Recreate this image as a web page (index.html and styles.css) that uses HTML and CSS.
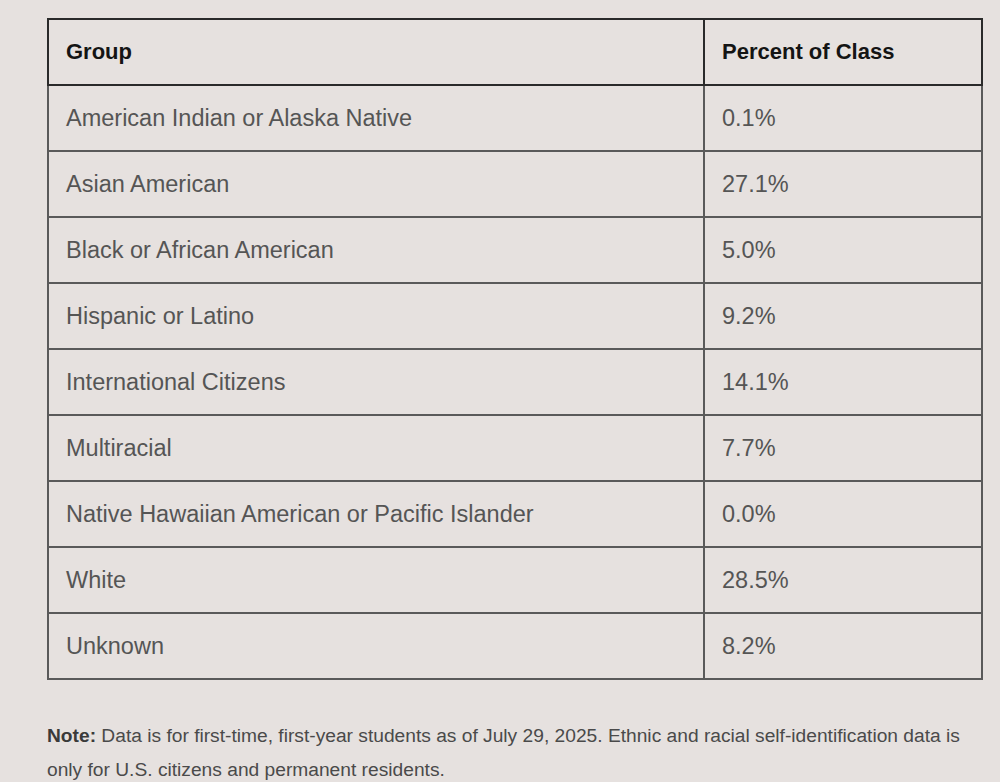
FILE: index.html
```html
<!DOCTYPE html>
<html>
<head>
<meta charset="utf-8">
<link rel="stylesheet" href="styles.css">
</head>
<body>
<div class="page">
  <table class="data">
    <thead>
      <tr><th class="c1">Group</th><th class="c2">Percent of Class</th></tr>
    </thead>
    <tbody>
      <tr><td>American Indian or Alaska Native</td><td>0.1%</td></tr>
      <tr><td>Asian American</td><td>27.1%</td></tr>
      <tr><td>Black or African American</td><td>5.0%</td></tr>
      <tr><td>Hispanic or Latino</td><td>9.2%</td></tr>
      <tr><td>International Citizens</td><td>14.1%</td></tr>
      <tr><td>Multiracial</td><td>7.7%</td></tr>
      <tr><td>Native Hawaiian American or Pacific Islander</td><td>0.0%</td></tr>
      <tr><td>White</td><td>28.5%</td></tr>
      <tr><td>Unknown</td><td>8.2%</td></tr>
    </tbody>
  </table>
  <p class="note"><strong>Note:</strong> Data is for first-time, first-year students as of July 29, 2025. Ethnic and racial self-identification data is only for U.S. citizens and permanent residents.</p>
</div>
</body>
</html>
```
FILE: styles.css
```css
html, body {
  margin: 0;
  padding: 0;
  background: #e6e1df;
}
.page {
  padding: 18px 18px 0 47px;
  font-family: "Liberation Sans", Arial, sans-serif;
}
.data {
  width: 936px;
  border-collapse: collapse;
  border: 2px solid #444;
}
.data th, .data td {
  height: 66px;
  box-sizing: border-box;
  padding: 0 17px;
  text-align: left;
  vertical-align: middle;
}
.data th {
  font-size: 22px;
  font-weight: bold;
  color: #141414;
  border: 2px solid #2a2a2a;
}
.data td {
  font-size: 23.5px;
  color: #555;
  border: 2px solid #5a5a5a;
}
.data .c1 { width: 656px; }
.note {
  margin: 39px 0 0 0;
  font-size: 19.2px;
  line-height: 34px;
  color: #4a4a4a;
  padding-right: 20px;
}
.note strong { color: #3a3a3a; }
```
